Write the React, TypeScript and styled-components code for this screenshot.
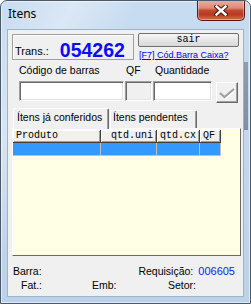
import React from "react";
import styled, { createGlobalStyle } from "styled-components";

const Global = createGlobalStyle`
  html, body { margin: 0; padding: 0; background: #ffffff; }
  body { font-family: "Liberation Sans", Arial, sans-serif; font-size: 10.5px; color: #000; }
  * { box-sizing: border-box; }
`;

const Window = styled.div`
  width: 251px;
  height: 304px;
  border: 1px solid #4a5868;
  border-radius: 7px 7px 0 0;
  background:
    linear-gradient(to bottom, #8d9db0, #7f90a4) no-repeat right 2px top 61px / 4px 68px,
    linear-gradient(118deg, rgba(255,255,255,0) 0%, rgba(255,255,255,0.35) 18%, rgba(255,255,255,0) 34%),
    linear-gradient(to bottom, #c8dcf1 0%, #bcd2ea 100%);
  box-shadow: inset 0 0 0 1px rgba(255, 255, 255, 0.55);
  display: flex;
  flex-direction: column;
  padding: 0 6px 6px 6px;
  overflow: hidden;
`;

const TitleBar = styled.div`
  height: 28px;
  display: flex;
  align-items: flex-start;
  justify-content: space-between;
`;

const Title = styled.div`
  font-family: "Noto Sans", "Open Sans", sans-serif;
  font-size: 12px;
  line-height: 14px;
  padding: 6px 0 0 1px;
  color: #000;
`;

const CloseButton = styled.div`
  width: 48px;
  height: 21px;
  margin: -1px -1px 0 0;
  border: 1px solid #5a1a10;
  border-top: none;
  border-radius: 0 0 5px 5px;
  background: linear-gradient(
    to bottom,
    #eab1a3 0%,
    #dc8a78 40%,
    #c24a31 52%,
    #b9381f 72%,
    #d4704f 100%
  );
  box-shadow: inset 0 0 0 1px rgba(255, 255, 255, 0.35);
  display: flex;
  align-items: center;
  justify-content: center;
`;

const Client = styled.div`
  flex: 1;
  background: #f0f0f0;
  border: 1px solid #9fb3c8;
  display: flex;
  flex-direction: column;
`;

const TopRow = styled.div`
  display: flex;
  align-items: flex-start;
  padding: 3px 0 0 4px;
`;

const TransPanel = styled.div`
  margin-top: 1px;
  width: 122px;
  height: 26px;
  border: 1px solid #a0a0a0;
  box-shadow: inset 1px 1px 0 #ffffff;
  display: flex;
  align-items: flex-start;
  padding-left: 2px;
`;

const TransLabel = styled.span`
  margin-top: 10px;
  line-height: 13px;
  font-size: 11px;
`;

const TransNumber = styled.span`
  margin: 5px 0 0 11px;
  font-size: 19.5px;
  line-height: 20px;
  font-weight: bold;
  color: #0a0aff;
`;

const RightCol = styled.div`
  margin-left: 4px;
  width: 101px;
  display: flex;
  flex-direction: column;
`;

const SairButton = styled.button`
  height: 14px;
  padding: 0;
  border: 1px solid #707070;
  border-radius: 2px;
  background: linear-gradient(to bottom, #f7f7f7 0%, #e6e6e6 50%, #d8d8d8 100%);
  font-family: "Liberation Mono", "Courier New", monospace;
  font-size: 10px;
  line-height: 12px;
  color: #000;
`;

const LinkText = styled.a`
  margin-top: 3px;
  padding-left: 1px;
  font-size: 9px;
  line-height: 11px;
  color: #0000ff;
  text-decoration: underline;
  white-space: nowrap;
`;

const FieldsRow = styled.div`
  display: flex;
  align-items: flex-start;
  margin-top: 3px;
  padding-left: 11px;
`;

const Field = styled.div<{ $w: number; $ml: number }>`
  width: ${(p) => p.$w}px;
  margin-left: ${(p) => p.$ml}px;
  display: flex;
  flex-direction: column;
`;

const FieldLabel = styled.label<{ $pl: number }>`
  height: 13px;
  line-height: 13px;
  font-size: 10.5px;
  padding-left: ${(p) => p.$pl}px;
  white-space: nowrap;
`;

const TextBox = styled.input<{ $disabled?: boolean }>`
  margin-top: 4px;
  width: 100%;
  height: 20px;
  padding: 0 2px;
  border: 1px solid;
  border-color: #a0a0a0 #ffffff #ffffff #a0a0a0;
  box-shadow: inset 1px 1px 0 #696969, inset -1px -1px 0 #e3e3e3;
  background: ${(p) => (p.$disabled ? "#f0f0f0" : "#ffffff")};
  font-family: "Liberation Sans", Arial, sans-serif;
  font-size: 11px;
  outline: none;
`;

const CheckButton = styled.button`
  width: 22px;
  height: 21px;
  margin: 18px 0 0 4px;
  padding: 0;
  border: 1px solid;
  border-color: #ffffff #696969 #696969 #ffffff;
  box-shadow: inset -1px -1px 0 #a0a0a0;
  background: #f0f0f0;
  display: flex;
  align-items: center;
  justify-content: center;
`;

const TabStrip = styled.div`
  display: flex;
  align-items: flex-end;
  margin-top: 5px;
  padding-left: 5px;
  height: 20px;
  position: relative;
  z-index: 1;
`;

const Tab = styled.div<{ $active?: boolean; $w: number }>`
  width: ${(p) => p.$w}px;
  height: ${(p) => (p.$active ? 21 : 18)}px;
  margin-bottom: ${(p) => (p.$active ? -1 : 0)}px;
  margin-left: ${(p) => (p.$active ? 0 : 1)}px;
  padding: ${(p) => (p.$active ? "2px 0 0 3px" : "0 0 0 2px")};
  border: 1px solid;
  border-bottom: none;
  border-color: #ffffff #696969 transparent #ffffff;
  box-shadow: inset -1px 0 0 #a0a0a0;
  border-radius: 2px 2px 0 0;
  background: #f0f0f0;
  line-height: 13px;
  font-size: 10.5px;
  white-space: nowrap;
`;

const TabPanel = styled.div`
  margin-left: 4px;
  width: 229px;
  height: 128px;
  border: 1px solid;
  border-color: #ffffff #696969 #696969 #ffffff;
  background: #ffffe6;
  padding-top: 1px;
`;

const Grid = styled.div`
  display: grid;
  grid-template-columns: 88px 56px 43px 21px;
  width: 208px;
`;

const HeadCell = styled.div<{ $align: "left" | "right" }>`
  height: 13px;
  border-right: 1px solid #404040;
  border-bottom: 1px solid #404040;
  box-shadow: inset 1px 1px 0 #ffffff, inset -1px -1px 0 #a0a0a0;
  background: #f0f0f0;
  font-family: "Liberation Mono", "Courier New", monospace;
  font-size: 10px;
  line-height: 12px;
  text-align: ${(p) => p.$align};
  padding: 0 3px;
  white-space: nowrap;
  overflow: hidden;
`;

const RowCell = styled.div`
  height: 13px;
  background: #3399ff;
  border-right: 1px solid #c0c0c0;
  border-bottom: 1px solid #c0c0c0;
`;

const Footer = styled.div`
  margin-top: 8px;
  display: flex;
  flex-direction: column;
`;

const FooterRow = styled.div`
  display: flex;
  height: 14px;
  line-height: 14px;
  padding: 0 8px 0 5px;
`;

const Spacer = styled.div`
  flex: 1;
`;

const Value = styled.span`
  margin-left: 5px;
  font-size: 11px;
  color: #0a1cff;
`;

const FooterGrid = styled.div`
  display: grid;
  grid-template-columns: 71px 76px 1fr;
  height: 14px;
  line-height: 14px;
  padding-left: 13px;
`;

const columns: { title: string; align: "left" | "right" }[] = [
  { title: "Produto", align: "left" },
  { title: "qtd.uni", align: "right" },
  { title: "qtd.cx", align: "right" },
  { title: "QF", align: "left" },
];

export default function App() {
  return (
    <>
      <Global />
      <Window>
        <TitleBar>
          <Title>Itens</Title>
          <CloseButton>
            <svg width="14" height="11" viewBox="0 0 14 11">
              <path d="M2.5 1.5 L11.5 9.5 M11.5 1.5 L2.5 9.5" stroke="#4a1810" strokeWidth="4.4" strokeLinecap="square" fill="none" />
              <path d="M2.5 1.5 L11.5 9.5 M11.5 1.5 L2.5 9.5" stroke="#ffffff" strokeWidth="2.4" strokeLinecap="square" fill="none" />
            </svg>
          </CloseButton>
        </TitleBar>
        <Client>
          <TopRow>
            <TransPanel>
              <TransLabel>Trans.:</TransLabel>
              <TransNumber>054262</TransNumber>
            </TransPanel>
            <RightCol>
              <SairButton>sair</SairButton>
              <LinkText>[F7] Cód.Barra Caixa?</LinkText>
            </RightCol>
          </TopRow>
          <FieldsRow>
            <Field $w={105} $ml={0}>
              <FieldLabel $pl={0}>Código de barras</FieldLabel>
              <TextBox readOnly />
            </Field>
            <Field $w={27} $ml={1}>
              <FieldLabel $pl={1}>QF</FieldLabel>
              <TextBox readOnly $disabled />
            </Field>
            <Field $w={59} $ml={1}>
              <FieldLabel $pl={2}>Quantidade</FieldLabel>
              <TextBox readOnly />
            </Field>
            <CheckButton>
              <svg width="18" height="14" viewBox="0 0 18 14">
                <path d="M2 7 L6.5 11 L16 3" stroke="#ffffff" strokeWidth="2.2" fill="none" transform="translate(1 1)" />
                <path d="M2 7 L6.5 11 L16 3" stroke="#a0a0a0" strokeWidth="2.2" fill="none" />
              </svg>
            </CheckButton>
          </FieldsRow>
          <TabStrip>
            <Tab $active $w={96}>Ítens já conferidos</Tab>
            <Tab $w={87}>Ítens pendentes</Tab>
          </TabStrip>
          <TabPanel>
            <Grid>
              {columns.map((c) => (
                <HeadCell key={c.title} $align={c.align}>{c.title}</HeadCell>
              ))}
              {columns.map((c) => (
                <RowCell key={"r" + c.title} />
              ))}
            </Grid>
          </TabPanel>
          <Footer>
            <FooterRow>
              <span>Barra:</span>
              <Spacer />
              <span>Requisição:</span>
              <Value>006605</Value>
            </FooterRow>
            <FooterGrid>
              <span>Fat.:</span>
              <span>Emb:</span>
              <span>Setor:</span>
            </FooterGrid>
          </Footer>
        </Client>
      </Window>
    </>
  );
}
